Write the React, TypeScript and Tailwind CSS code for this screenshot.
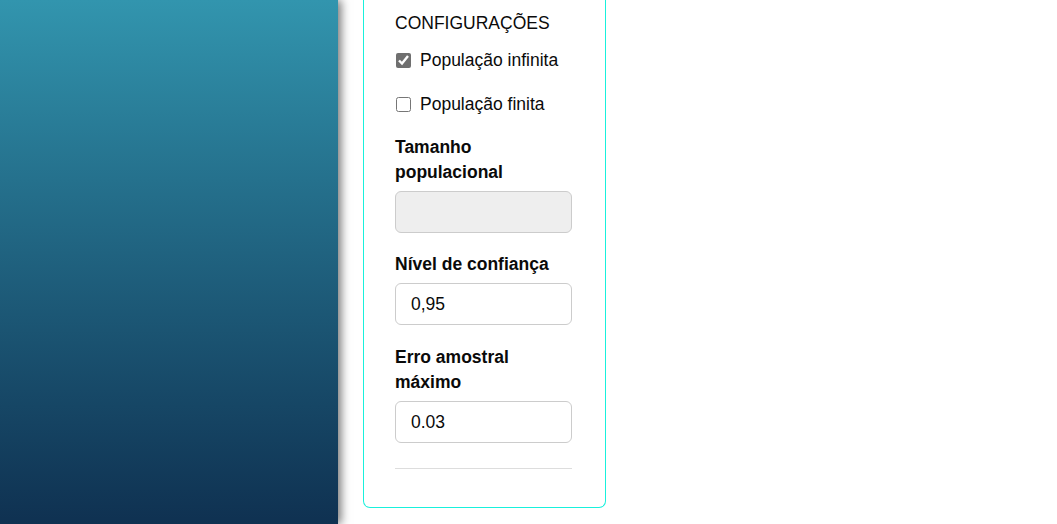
import React from "react";

export default function App() {
  return (
    <div className="flex h-[524px] w-[1057px] overflow-hidden bg-white font-['Liberation_Sans',Arial,sans-serif] text-[17.5px] text-[#0a0a0a]">
      <div className="relative z-10 h-full w-[338px] shrink-0 bg-gradient-to-b from-[#3295ae] to-[#0f3151] shadow-[3px_0_9px_rgba(0,0,0,0.55)]" />
      <div className="pl-[25px]">
        <div className="flex w-[243px] flex-col rounded-b-[7px] border-x border-b border-[#19f0dc] px-[31px] pt-[13px] pb-[38px]">
          <div className="leading-[20px]">CONFIGURAÇÕES</div>
          <label className="mt-[15px] flex h-[24px] items-center">
            <input type="checkbox" defaultChecked className="ml-[1px] h-[15px] w-[15px] accent-[#6f6f6f]" />
            <span className="ml-[9px]">População infinita</span>
          </label>
          <label className="mt-[20px] flex h-[24px] items-center">
            <input type="checkbox" className="ml-[1px] h-[15px] w-[15px]" />
            <span className="ml-[9px]">População finita</span>
          </label>
          <div className="mt-[19px] font-bold leading-[25px]">Tamanho populacional</div>
          <input
            disabled
            className="mt-[6px] box-border h-[42px] w-[177px] rounded-[6px] border border-[#cccccc] bg-[#eeeeee] px-[15px] outline-none"
          />
          <div className="mt-[19px] font-bold leading-[25px]">Nível de confiança</div>
          <input
            defaultValue="0,95"
            className="mt-[6px] box-border h-[42px] w-[177px] rounded-[6px] border border-[#cccccc] bg-white px-[15px] text-[#0a0a0a] outline-none"
          />
          <div className="mt-[20px] font-bold leading-[25px]">Erro amostral máximo</div>
          <input
            defaultValue="0.03"
            className="mt-[6px] box-border h-[42px] w-[177px] rounded-[6px] border border-[#cccccc] bg-white px-[15px] text-[#0a0a0a] outline-none"
          />
          <div className="mt-[25px] h-px w-[177px] bg-[#dddddd]" />
        </div>
      </div>
    </div>
  );
}
